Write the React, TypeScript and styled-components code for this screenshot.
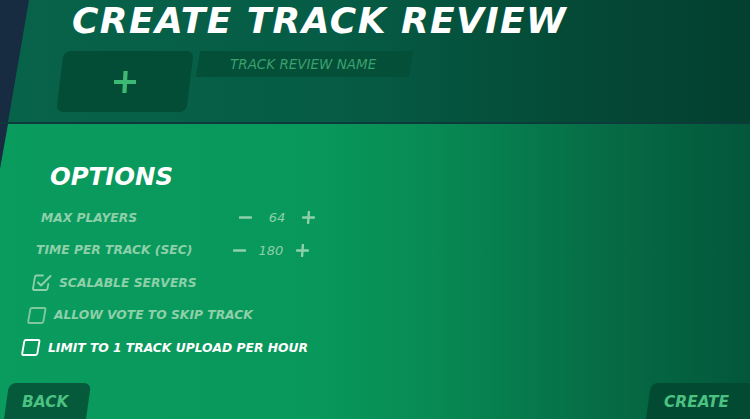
import React from "react";
import styled, { createGlobalStyle } from "styled-components";

const Global = createGlobalStyle`
  html, body { margin: 0; padding: 0; }
  body {
    background: #172b41;
    overflow: hidden;
    font-family: "DejaVu Sans", "Liberation Sans", sans-serif;
  }
`;

const Screen = styled.div`
  width: 750px;
  height: 419px;
  display: flex;
  flex-direction: column;
  overflow: hidden;
  background: #172b41;
`;

const TopPanel = styled.section`
  height: 122px;
  flex: none;
  background: linear-gradient(90deg, #076349 0%, #065c45 45%, #044b37 75%, #033f2e 100%);
  clip-path: polygon(29px 0, 100% 0, 100% 100%, 8px 100%);
  display: flex;
  flex-direction: column;
  overflow: hidden;
`;

const Title = styled.h1`
  margin: 0;
  padding: 3px 0 0 72px;
  font-size: 36px;
  line-height: 1;
  font-weight: 700;
  font-style: italic;
  color: #ffffff;
  letter-spacing: 1.4px;
  white-space: nowrap;
`;

const HeaderRow = styled.div`
  margin-top: 12px;
  padding-left: 60px;
  display: flex;
  align-items: flex-start;
  gap: 8px;
`;

const Thumb = styled.div`
  position: relative;
  width: 130px;
  height: 61px;
  display: flex;
  align-items: center;
  justify-content: center;
  &::before {
    content: "";
    position: absolute;
    inset: 0;
    background: #034d37;
    border-radius: 7px;
    transform: skewX(-7deg);
  }
`;

const PlusIcon = styled.svg`
  position: relative;
  width: 26px;
  height: 26px;
`;

const NameField = styled.div`
  position: relative;
  width: 213px;
  height: 26px;
  display: flex;
  align-items: center;
  padding-left: 32px;
  box-sizing: border-box;
  &::before {
    content: "";
    position: absolute;
    inset: 0;
    background: #034f38;
    transform: skewX(-9deg);
  }
`;

const Placeholder = styled.span`
  position: relative;
  font-size: 13.5px;
  font-weight: 400;
  font-style: italic;
  color: #3c9f6e;
  white-space: nowrap;
`;

const Divider = styled.div`
  height: 2px;
  flex: none;
  background: #0d3b3c;
`;

const BottomPanel = styled.section`
  flex: 1;
  background: linear-gradient(90deg, #0a9b5f 0%, #09985c 42%, #078a53 58%, #066f47 78%, #03573b 100%);
  clip-path: polygon(8px 0, 100% 0, 100% 100%, 0 100%, 0 45px);
  display: flex;
  flex-direction: column;
  padding-top: 41px;
  overflow: hidden;
`;

const SectionTitle = styled.h2`
  margin: 0 0 12px 0;
  padding-left: 50px;
  font-size: 24.4px;
  line-height: 1;
  font-weight: 700;
  font-style: italic;
  color: #ffffff;
`;

const OptionList = styled.div`
  display: flex;
  flex-direction: column;
`;

const Row = styled.div<{ $indent: number }>`
  height: 32.5px;
  display: flex;
  align-items: center;
  padding-left: ${(p) => p.$indent}px;
`;

const Label = styled.span<{ $bright?: boolean; $width?: number }>`
  font-size: 12.3px;
  font-weight: 700;
  font-style: italic;
  color: ${(p) => (p.$bright ? "#ffffff" : "#8ed0a9")};
  white-space: nowrap;
  ${(p) => (p.$width ? `width: ${p.$width}px;` : "")}
`;

const Stepper = styled.div`
  display: flex;
  align-items: center;
`;

const StepSign = styled.svg`
  width: 13px;
  height: 13px;
  flex: none;
`;

const StepValue = styled.span`
  width: 50px;
  text-align: center;
  font-size: 13px;
  font-weight: 400;
  font-style: italic;
  color: #8ed0a9;
`;

const CheckBox = styled.svg`
  width: 22px;
  height: 19px;
  flex: none;
  margin-right: 6px;
`;

const Footer = styled.div`
  margin-top: auto;
  margin-bottom: -8px;
  display: flex;
  justify-content: space-between;
  align-items: flex-end;
`;

const FooterButton = styled.button<{ $variant: "back" | "create" }>`
  position: relative;
  height: 44px;
  border: 0;
  background: transparent;
  padding: 0 0 7px 16px;
  font-family: inherit;
  font-size: 15.4px;
  font-weight: 700;
  font-style: italic;
  color: #4cc282;
  display: flex;
  align-items: center;
  width: ${(p) => (p.$variant === "back" ? "82px" : "108px")};
  margin-left: ${(p) => (p.$variant === "back" ? "6px" : "0")};
  margin-right: ${(p) => (p.$variant === "create" ? "-6px" : "0")};
  &::before {
    content: "";
    position: absolute;
    inset: 0;
    border-radius: 7px;
    background: ${(p) => (p.$variant === "back" ? "#045a3b" : "#034a33")};
    transform: skewX(-8deg);
  }
  span { position: relative; }
`;

const Minus = () => (
  <StepSign viewBox="0 0 13 13">
    <path d="M1 6.5H12" stroke="#8ed0a9" strokeWidth="2.6" strokeLinecap="round" />
  </StepSign>
);

const Plus = () => (
  <StepSign viewBox="0 0 13 13">
    <path d="M1 6.5H12M6.9 1L6.1 12" stroke="#8ed0a9" strokeWidth="2.4" strokeLinecap="round" />
  </StepSign>
);

const Check = ({ checked, color }: { checked?: boolean; color: string }) => (
  <CheckBox viewBox="0 0 22 19">
    {checked ? (
      <>
        <path
          d="M12 2.5H5.5Q4.2 2.5 4 3.8L2 15.5Q1.8 17 3.3 17H15Q16.3 17 16.5 15.7L17.3 11"
          fill="none"
          stroke={color}
          strokeWidth="1.8"
          strokeLinejoin="round"
          strokeLinecap="round"
        />
        <path d="M7 9.5L10 12.5L19.5 3" fill="none" stroke={color} strokeWidth="2" strokeLinecap="round" strokeLinejoin="round" />
      </>
    ) : (
      <path
        d="M6 2H18.2Q19.7 2 19.4 3.5L17.3 15.6Q17 17 15.6 17H3.4Q1.9 17 2.2 15.5L4.3 3.4Q4.6 2 6 2Z"
        fill="none"
        stroke={color}
        strokeWidth="1.9"
        strokeLinejoin="round"
      />
    )}
  </CheckBox>
);

export default function App() {
  return (
    <>
      <Global />
      <Screen>
        <TopPanel>
          <Title>CREATE TRACK REVIEW</Title>
          <HeaderRow>
            <Thumb>
              <PlusIcon viewBox="0 0 26 26">
                <path d="M2 13H24M13.6 2L12.4 24" stroke="#3eb974" strokeWidth="4.2" />
              </PlusIcon>
            </Thumb>
            <NameField>
              <Placeholder>TRACK REVIEW NAME</Placeholder>
            </NameField>
          </HeaderRow>
        </TopPanel>
        <Divider />
        <BottomPanel>
          <SectionTitle>OPTIONS</SectionTitle>
          <OptionList>
            <Row $indent={41}>
              <Label $width={198}>MAX PLAYERS</Label>
              <Stepper>
                <Minus />
                <StepValue>64</StepValue>
                <Plus />
              </Stepper>
            </Row>
            <Row $indent={36}>
              <Label $width={197}>TIME PER TRACK (SEC)</Label>
              <Stepper>
                <Minus />
                <StepValue>180</StepValue>
                <Plus />
              </Stepper>
            </Row>
            <Row $indent={31}>
              <Check checked color="#8ed0a9" />
              <Label>SCALABLE SERVERS</Label>
            </Row>
            <Row $indent={26}>
              <Check color="#7fc79c" />
              <Label>ALLOW VOTE TO SKIP TRACK</Label>
            </Row>
            <Row $indent={20}>
              <Check color="#ffffff" />
              <Label $bright>LIMIT TO 1 TRACK UPLOAD PER HOUR</Label>
            </Row>
          </OptionList>
          <Footer>
            <FooterButton $variant="back"><span>BACK</span></FooterButton>
            <FooterButton $variant="create"><span>CREATE</span></FooterButton>
          </Footer>
        </BottomPanel>
      </Screen>
    </>
  );
}
